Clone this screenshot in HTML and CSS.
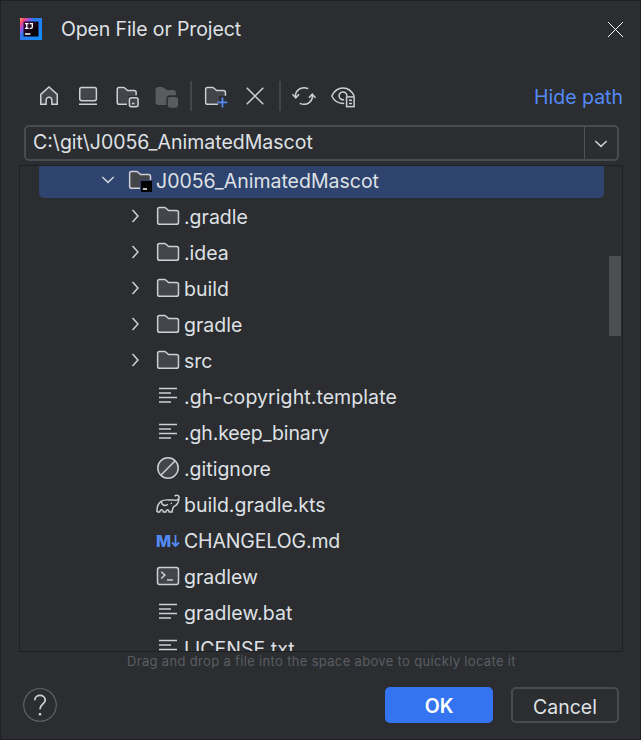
FILE: index.html
```html
<!DOCTYPE html>
<html lang="en">
<head>
<meta charset="utf-8">
<title>Open File or Project</title>
<link rel="stylesheet" href="styles.css">
</head>
<body>
<svg class="defs" aria-hidden="true">
  <symbol id="folder" viewBox="0 0 16 16">
    <path class="f s" d="M1.1 3.6C1.1 2.9 1.6 2.4 2.3 2.4H5.7C6 2.4 6.3 2.5 6.5 2.7L8.4 4.4H13.6C14.4 4.4 15 5 15 5.8V12.1C15 12.9 14.4 13.5 13.6 13.5H2.4C1.7 13.5 1.1 12.9 1.1 12.1Z"/>
  </symbol>
  <symbol id="text" viewBox="0 0 16 16">
    <path class="s" d="M2 3H14M2 6H10M2 9H14M2 12H10"/>
  </symbol>
  <symbol id="chevron-right" viewBox="0 0 16 16"><path class="s" d="M5.7 4L9.3 8L5.7 12"/></symbol>
  <symbol id="chevron-down" viewBox="0 0 16 16"><path class="s" d="M4.2 6L8 9.6L11.8 6"/></symbol>
</svg>
<div class="dialog">
  <header class="titlebar">
    <svg class="logo" viewBox="0 0 22 22">
      <defs>
        <linearGradient id="lg" x1="0" y1="0" x2="1" y2=".75">
          <stop offset="0" stop-color="#ffb060"/><stop offset=".12" stop-color="#fe4b62"/>
          <stop offset=".26" stop-color="#b04bd8"/><stop offset=".42" stop-color="#2f78f0"/><stop offset="1" stop-color="#148cf8"/>
        </linearGradient>
        <linearGradient id="lk" x1="0" y1="0" x2="1" y2="1">
          <stop offset="0" stop-color="#3a0b35"/><stop offset=".6" stop-color="#120310"/><stop offset="1" stop-color="#000"/>
        </linearGradient>
      </defs>
      <path fill="url(#lg)" d="M0 0H22V22H0Z"/>
      <path fill="url(#lk)" d="M3.5 3.5H18.5V18.5H3.5Z"/>
      <path fill="none" stroke="#fff" stroke-width="1.3" d="M5 5.6H8.6M6.8 5.6V10.4M5 10.4H8.6M9.7 5.6H12.3V9C12.3 10 11.7 10.4 11 10.4H9.6M5 16H10.4"/>
    </svg>
    <h1>Open File or Project</h1>
    <svg class="close" viewBox="0 0 15 15"><path d="M0 0L15 15M15 0L0 15"/></svg>
  </header>

  <div class="toolbar">
    <svg class="icon" viewBox="0 0 16 16"><path class="f s" d="M2.5 6.9L8 2L13.5 6.9V13.5H9.9V10.8C9.9 8.2 6.1 8.2 6.1 10.8V13.5H2.5Z"/></svg>
    <svg class="icon" viewBox="0 0 16 16"><rect class="f s" x="2.5" y="2.4" width="11.1" height="8.7" rx="1.2"/><path class="s" d="M2 13.5H14"/></svg>
    <svg class="icon" viewBox="0 0 16 16"><path class="f" d="M1.5 3H6L8.4 4.6H14V8H9V13H2Z"/><path class="s" d="M8 13.5H2.9C2.1 13.5 1.5 12.9 1.5 12.1V3.6C1.5 2.9 2 2.4 2.7 2.4H5.7C6 2.4 6.3 2.5 6.5 2.7L8.4 4.4H12.7C13.5 4.4 14.1 5 14.1 5.8V7.5"/><rect class="f s" x="9.6" y="9.1" width="5.8" height="6" rx="1.3"/><path class="s" d="M11.3 13H13"/></svg>
    <svg class="icon disabled" viewBox="0 0 16 16"><path d="M1 3.6C1 2.7 1.7 2 2.6 2H5.8L8.5 4H13C14 4 14.6 4.8 14.6 5.8V7.5H10.5C9.2 7.5 8.2 8.5 8.2 9.8V14H2.6C1.7 14 1 13.3 1 12.4Z"/><rect x="9.2" y="8.6" width="6.8" height="7.2" rx="1.8"/></svg>
    <i class="sep"></i>
    <svg class="icon" viewBox="0 0 16 16"><path class="f" d="M1.5 3H6L8.4 4.6H14V8H10V13H2Z"/><path class="s" d="M9.4 13.5H2.4C1.7 13.5 1.1 12.9 1.1 12.1V3.6C1.1 2.9 1.6 2.4 2.3 2.4H5.7C6 2.4 6.3 2.5 6.5 2.7L8.4 4.4H12.9C13.7 4.4 14.3 5 14.3 5.8V7.8"/><path class="blue" d="M12.3 9V15.6M9 12.3H15.6"/></svg>
    <svg class="icon" viewBox="0 0 16 16"><path class="s" d="M2.5 2.5L13.5 13.5M13.5 2.5L2.5 13.5"/></svg>
    <i class="sep second"></i>
    <svg class="icon refresh" viewBox="0 0 16 16"><path class="s" d="M2.5 9.2C1.6 4.6 6 1 10.8 3.1M.3 6.8L2.5 9.2L4.7 6.8M13.5 6.8C14.4 11.4 10 15 5.2 12.9M11.3 9.2L13.5 6.8L15.7 9.2"/></svg>
    <svg class="icon" viewBox="0 0 16 16"><path class="s" d="M15.5 8C12 .9 4 .9.5 8C2.3 11.5 5.2 13.2 8.8 12.9M8.8 10.4A2.6 2.6 0 1 1 10.6 8"/><rect class="s" x="10.4" y="8.6" width="5" height="6.5"/><path class="s" d="M12 10.8H14M12 13H14"/></svg>
    <a class="link">Hide path</a>
  </div>

  <div class="path"><span>C:\git\J0056_AnimatedMascot</span><b><svg class="icon" viewBox="0 0 16 16"><use href="#chevron-down"/></svg></b></div>

  <div class="tree">
    <div class="rows">
      <div class="row root"><svg class="icon arrow"><use href="#chevron-down"/></svg><svg class="icon" viewBox="0 0 16 16"><use href="#folder"/><path fill="#2e436e" d="M8 8H16V16H8Z"/><path fill="#000" d="M8.7 8.7H16V16H8.7Z"/><path stroke="#fff" d="M9.9 14H12.7"/></svg><span>J0056_AnimatedMascot</span></div>
      <div class="row"><svg class="icon arrow"><use href="#chevron-right"/></svg><svg class="icon"><use href="#folder"/></svg><span>.gradle</span></div>
      <div class="row"><svg class="icon arrow"><use href="#chevron-right"/></svg><svg class="icon"><use href="#folder"/></svg><span>.idea</span></div>
      <div class="row"><svg class="icon arrow"><use href="#chevron-right"/></svg><svg class="icon"><use href="#folder"/></svg><span>build</span></div>
      <div class="row"><svg class="icon arrow"><use href="#chevron-right"/></svg><svg class="icon"><use href="#folder"/></svg><span>gradle</span></div>
      <div class="row"><svg class="icon arrow"><use href="#chevron-right"/></svg><svg class="icon"><use href="#folder"/></svg><span>src</span></div>
      <div class="row file"><svg class="icon"><use href="#text"/></svg><span class="wide">.gh-copyright.template</span></div>
      <div class="row file"><svg class="icon"><use href="#text"/></svg><span class="tight">.gh.keep_binary</span></div>
      <div class="row file"><svg class="icon" viewBox="0 0 16 16"><circle class="f s" cx="8" cy="8" r="6.8"/><path class="s" d="M3.2 12.8L12.8 3.2"/></svg><span>.gitignore</span></div>
      <div class="row file"><svg class="icon" viewBox="0 0 16 16"><path class="s" d="M.7 13.3C.5 10.2 1.3 7.7 3.4 6.2C5.7 4.6 8.5 5.5 10.7 5.3C12.5 5.1 13.4 6.1 14.6 5C16 3.8 15.3 2 13.8 2.1C13.2 2.1 12.8 2.4 12.5 2.8M15.3 3.5C15.4 7 13.6 9.1 11.7 9.9C11.1 11 10.8 12 10.7 13.3H8.8C8.5 11.3 6.9 11.3 6.6 13.3H4.9C4.5 11.3 2.9 11.3 2.5 13.3H.7M3.6 6.8C4.2 8.9 6.1 9.6 7.9 8.3M9.8 7.4L10.6 7.8"/></svg><span>build.gradle.kts</span></div>
      <div class="row file"><span class="md">M</span><svg class="mdarrow" viewBox="0 0 9 13"><path d="M4.5 0V11M1 7.5L4.5 11L8 7.5"/></svg><span class="tight">CHANGELOG.md</span></div>
      <div class="row file"><svg class="icon" viewBox="0 0 16 16"><rect class="f s" x="1" y="2.4" width="14" height="11.2" rx="1.5"/><path class="s" d="M3.5 5.2L5.9 7.4L3.5 9.7M7.3 10.7H11.3"/></svg><span>gradlew</span></div>
      <div class="row file"><svg class="icon"><use href="#text"/></svg><span class="wide">gradlew.bat</span></div>
      <div class="row file"><svg class="icon"><use href="#text"/></svg><span>LICENSE.txt</span></div>
    </div>
    <div class="thumb"></div>
  </div>
  <p class="hint">Drag and drop a file into the space above to quickly locate it</p>
  <footer>
    <svg class="help" viewBox="0 0 34 34"><circle cx="17" cy="17" r="16.3"/><path d="M11.8 12.2C11.8 5.8 22.2 5.8 22.2 12.2C22.2 16 17 16 17 21.3"/><path class="dot" d="M15.8 25H18.2V27.4H15.8Z"/></svg>
    <button class="ok">OK</button>
    <button class="cancel">Cancel</button>
  </footer>
</div>
</body>
</html>
```
FILE: styles.css
```css
* { box-sizing: border-box; }
body { margin: 0; background: #2b2d30; color: #dfe1e5; font: 19.5px/36px Inter, "Liberation Sans", sans-serif; }
.defs { display: none; }
.dialog { width: 641px; height: 740px; border: 1px solid #1f2023; overflow: hidden; display: flex; flex-direction: column; }
.icon { width: 24px; height: 24px; flex: none; }
.s { fill: none; stroke: #ced0d6; stroke-width: 1; }
.f { fill: #43454a; }
.titlebar { height: 56px; padding: 0 17px 0 19px; display: flex; align-items: center; }
.logo { width: 22px; height: 22px; }
h1 { margin: 0 auto 0 19px; font-size: 19.5px; font-weight: 400; letter-spacing: -.12px; }
.close { width: 15px; height: 15px; margin-top: 1px; fill: none; stroke: #fff; stroke-width: 1; }
.toolbar { height: 31px; margin: 23px 17px 0 36px; display: flex; align-items: center; gap: 15px; }
.disabled { fill: #5a5b5c; }
.sep { width: 2px; height: 30px; background: #43454a; margin: 0 -3px 0 -3px; }
.sep.second { margin: 0 -4px 0 -3px; }
.blue { stroke: #548af7; stroke-width: 1.2; }
.link { margin: 2px 0 0 auto; color: #548af7; }
.path { height: 36px; margin: 14px 21px 0 23px; border: 2px solid #484b50; border-radius: 5px; display: flex; line-height: 31px; }
.path span { flex: 1; padding-left: 7px; }
.path b { width: 33px; border-left: 1px solid #4e5157; display: flex; align-items: center; justify-content: center; }
.path .icon { margin-top: 2px; }
.tree { height: 487px; margin: 4px 17px 0 18px; border: 1px solid #1e1f22; overflow: hidden; display: flex; flex: none; }
.rows { width: 584px; margin-top: -3px; padding-left: 19px; }
.row { height: 36px; padding-left: 85px; display: flex; align-items: center; }
.row .icon { margin-top: -2px; }
.row > span:last-child { margin-left: 4px; }
.row > .wide { letter-spacing: .08px; }
.row > .tight { letter-spacing: -.13px; }
.root { height: 35px; margin-bottom: 1px; padding: 1px 0 0 57px; background: #2e436e; border-radius: 5px; }
.row .arrow { margin: -2px 8px 0 0; }
.file { padding-left: 117px; }
.row .md { color: #548af7; font: 800 16px/24px Inter, sans-serif; width: 15px; margin: 0; }
.mdarrow { width: 9px; height: 13px; fill: none; stroke: #548af7; stroke-width: 1.8; }
.thumb { width: 12px; height: 80px; margin: 90px 0 0 5px; background: #4d4e51; }
.hint { margin: 0 0 0 126px; font-size: 13px; line-height: 18px; letter-spacing: .33px; color: #5a5d63; white-space: nowrap; }
footer { display: flex; align-items: center; gap: 18px; margin: 17px 21px 0 22px; }
.help { width: 34px; height: 34px; margin-right: auto; fill: none; stroke: #ced0d6; stroke-width: 1.8; }
.help circle { stroke: #5a5d63; stroke-width: 1.3; }
.help .dot { fill: #ced0d6; stroke: none; }
button { width: 108px; height: 36px; padding: 0; border: 0; border-radius: 5px; font: inherit; color: #dfe1e5; background: none; }
.ok { background: #3574f0; color: #fff; font-weight: 600; padding-top: 1px; }
.cancel { border: 2px solid #484b50; }
```
